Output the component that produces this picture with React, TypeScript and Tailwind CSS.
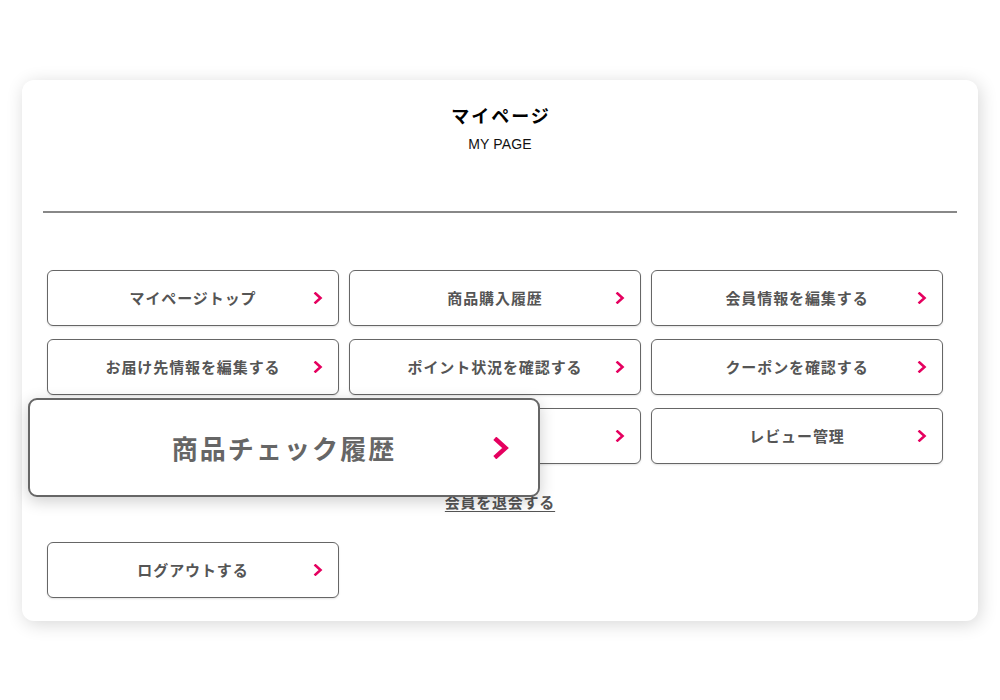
const font = { fontFamily: '"Noto Sans CJK JP", "Noto Sans", sans-serif' }

function Chevron({ size = 12, stroke = 2.6 }: { size?: number; stroke?: number }) {
  return (
    <svg width={size} height={size} viewBox="0 0 12 12" fill="none">
      <polyline points="3.5,1.5 8.5,6 3.5,10.5" stroke="#e5005f" strokeWidth={stroke} strokeLinecap="square" />
    </svg>
  )
}

function MenuButton({ label, hidden = false }: { label: string; hidden?: boolean }) {
  return (
    <div className="relative flex h-[56px] w-[292px] items-center justify-center rounded-[6px] border border-[#666] bg-white shadow-[0_1px_2px_rgba(0,0,0,0.12)]">
      <span className={`text-[15px] font-bold tracking-[0.06em] text-[#555] ${hidden ? 'invisible' : ''}`}>{label}</span>
      <span className="absolute right-[14px] top-1/2 -translate-y-1/2">
        <Chevron />
      </span>
    </div>
  )
}

const items = [
  'マイページトップ',
  '商品購入履歴',
  '会員情報を編集する',
  'お届け先情報を編集する',
  'ポイント状況を確認する',
  'クーポンを確認する',
  '商品チェック履歴',
  'お気に入り',
  'レビュー管理',
]

export default function App() {
  return (
    <div className="h-[700px] w-[1000px] bg-white" style={font}>
      <div className="pl-[22px] pt-[80px]">
        <div className="relative w-[956px] rounded-[12px] bg-white px-[21px] pb-[23px] pt-[23px] shadow-[2px_3px_18px_rgba(0,0,0,0.16)]">
          <div className="flex flex-col items-center">
            <h1 className="pl-[2px] text-[18px] font-bold leading-[24px] tracking-[0.11em] text-black">マイページ</h1>
            <p
              className="mt-[9px] text-[14px] leading-[16px] tracking-[0.01em] text-[#111]"
              style={{ fontFamily: '"Liberation Sans", Arial, sans-serif' }}
            >
              MY PAGE
            </p>
          </div>
          <div className="mt-[59px] h-[2px] w-[914px] bg-[#888]" />
          <div className="ml-[4px] mt-[57px] grid w-[896px] grid-cols-[292px_292px_292px] gap-x-[10px] gap-y-[13px]">
            {items.map((l, i) => (
              <MenuButton key={l} label={l} hidden={i === 6} />
            ))}
          </div>
          <div className="mt-[29px] flex justify-center">
            <a className="text-[15px] font-bold leading-[18px] tracking-[0.05em] text-[#555] underline underline-offset-[3px]">
              会員を退会する
            </a>
          </div>
          <div className="ml-[4px] mt-[31px]">
            <MenuButton label="ログアウトする" />
          </div>

          {/* magnified hover state */}
          <div className="absolute left-[6px] top-[318px] flex h-[99px] w-[512px] items-center justify-center rounded-[9px] border-2 border-[#666] bg-white shadow-[0_4px_16px_rgba(0,0,0,0.2)]">
            <span className="text-[26px] font-bold tracking-[0.08em] text-[#666]">商品チェック履歴</span>
            <span className="absolute right-[26px] top-1/2 -translate-y-1/2">
              <Chevron size={22} stroke={2.4} />
            </span>
          </div>
        </div>
      </div>
    </div>
  )
}
